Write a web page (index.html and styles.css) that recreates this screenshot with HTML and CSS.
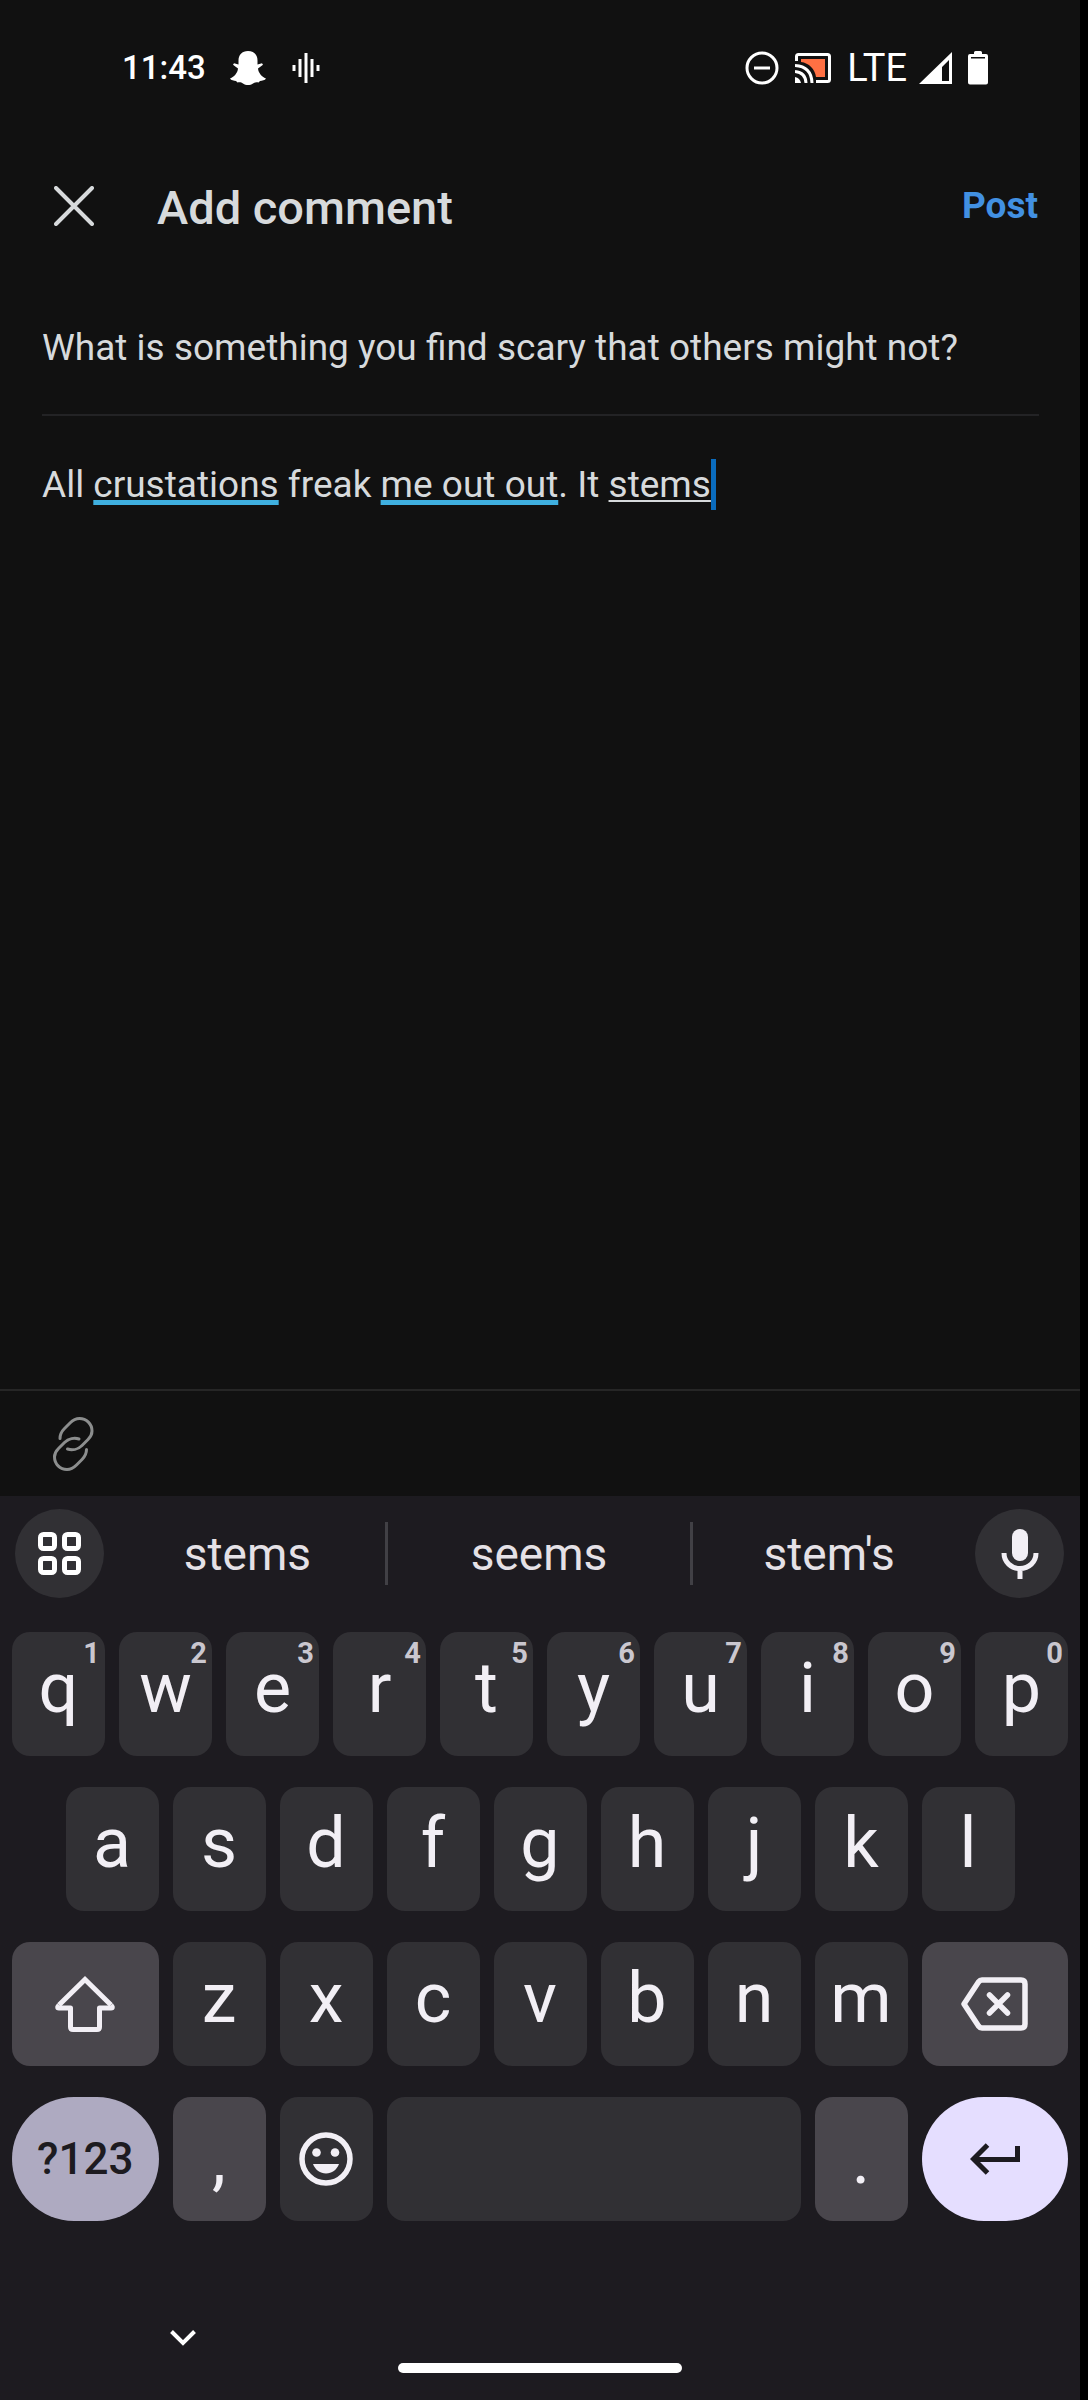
FILE: index.html
```html
<!DOCTYPE html>
<html lang="en">
<head>
<meta charset="utf-8">
<meta name="viewport" content="width=device-width, initial-scale=1">
<title>Add comment</title>
<link rel="stylesheet" href="styles.css">
</head>
<body>
<div class="screen">
  <div class="status">
    <span class="clock">11:43</span>
    <svg class="ghost" width="36" height="34" viewBox="0 0 36 34" fill="#fff" aria-hidden="true"><path d="M18 0C24 0 27.500 4 27.500 9.500V13.500L32 12.300L33 13.800L28 17.500C28.500 22 31.500 25.500 36 27.500C35 29.500 32 29.500 30 30L28.500 31.500C26 31 24.500 31.500 23 32.500C20 34.500 16 34.500 13 32.500C11.500 31.500 10 31 7.500 31.500L6 30C4 29.500 1 29.500 0 27.500C4.500 25.500 7.500 22 8 17.500L3 13.800L4 12.300L8.500 13.500V9.500C8.500 4 12 0 18 0Z"/></svg>
    <svg width="28" height="30" viewBox="0 0 28 30" stroke="#fff" stroke-width="3" aria-hidden="true"><path d="M2 12v6M8 6v18M14 0v30M20 6v18M26 12v6"/></svg>
    <span class="spacer"></span>
    <svg width="34" height="34" viewBox="0 0 34 34" fill="none" stroke="#fff" stroke-width="3" aria-hidden="true"><circle cx="17" cy="17" r="15"/><path d="M9 17h16"/></svg>
    <svg width="36" height="30" viewBox="0 0 36 30" fill="none" stroke="#fff" stroke-width="3" aria-hidden="true"><path fill="#ff7043" stroke="none" d="M6 6H30V24H21C20 16 14 10 6 9Z"/><path d="M1.500 8V3.500Q1.500 1.500 3.500 1.500H32.500Q34.500 1.500 34.500 3.500V26.500Q34.500 28.500 32.500 28.500H21M0 12.500Q16.500 13.500 17 30M0 18.500Q10.500 19.500 11 30"/><path fill="#fff" stroke="none" d="M0 24Q5 25 6 30H0Z"/></svg>
    <span class="network">LTE</span>
    <svg class="signal" width="33" height="32" viewBox="0 0 33 32" aria-hidden="true"><path fill="#fff" fill-rule="evenodd" d="M33 0V32H0ZM30 8L23 15V29H30Z"/></svg>
    <svg width="20" height="34" viewBox="0 0 20 34" fill="#fff" aria-hidden="true"><path d="M6 3V1.500Q6 0 7.500 0H12.500Q14 0 14 1.500V3H18Q20 3 20 5V6H0V5Q0 3 2 3ZM0 7.500H20V31.500Q20 33.500 18 33.500H2Q0 33.500 0 31.500Z"/><path d="M0 5.500H3V8H0ZM17 5.500H20V8H17Z"/></svg>
  </div>

  <header class="header">
    <button class="close" aria-label="Close"><svg width="40" height="40" viewBox="0 0 40 40" fill="none" stroke="#d7dadc" stroke-width="4" stroke-linecap="round"><path d="M2 2L38 38M38 2L2 38"/></svg></button>
    <h1 class="title">Add comment</h1>
    <button class="post">Post</button>
  </header>

  <main class="compose">
    <p class="question" id="question">What is something you find scary that others might not?</p>
    <div class="comment" contenteditable="true" spellcheck="false" role="textbox" aria-multiline="true" aria-labelledby="question">All <span class="flagged">crustations</span> freak <span class="flagged">me out out</span>. It <span class="composing">stems</span><span class="caret"></span></div>
  </main>

  <div class="tools">
    <button aria-label="Insert link"><svg width="41" height="54" viewBox="0 0 41 54" fill="none" stroke="#8c8e8e" stroke-width="3" stroke-linecap="round"><path id="link-half" d="M7 21.500C7 17 9 14 11.500 11.500L17 6C20 3 23 1.500 26.500 1.500C33.500 1.500 39 7 39 14C39 17.500 37.500 20 35 22.500L29 28.500C25 32.500 19 33.500 14.500 32"/><use href="#link-half" transform="rotate(180 20.250 27)"/></svg></button>
  </div>

  <section class="keyboard" aria-label="Keyboard">
    <div class="strip">
      <button class="round" aria-label="Keyboard menu"><svg width="43" height="43" viewBox="0 0 43 43" fill="none" stroke="#fff" stroke-width="5"><rect x="2.500" y="2.500" width="14" height="14" rx="3"/><rect x="26.500" y="2.500" width="14" height="14" rx="3"/><rect x="2.500" y="26.500" width="14" height="14" rx="3"/><rect x="26.500" y="26.500" width="14" height="14" rx="3"/></svg></button>
      <div class="suggestions">
        <button>stems</button>
        <button>seems</button>
        <button>stem's</button>
      </div>
      <button class="round" aria-label="Voice input"><svg width="38" height="50" viewBox="0 0 38 50" fill="none" stroke="#f2eff5" stroke-width="5"><rect x="11" y="0" width="16" height="32" rx="8" fill="#f2eff5" stroke="none"/><path d="M3 24C3 33 10 39.500 19 39.500S35 33 35 24M19 39V50"/></svg></button>
    </div>

    <div class="keys">
      <button class="key">q<sup>1</sup></button>
      <button class="key">w<sup>2</sup></button>
      <button class="key">e<sup>3</sup></button>
      <button class="key">r<sup>4</sup></button>
      <button class="key">t<sup>5</sup></button>
      <button class="key">y<sup>6</sup></button>
      <button class="key">u<sup>7</sup></button>
      <button class="key">i<sup>8</sup></button>
      <button class="key">o<sup>9</sup></button>
      <button class="key">p<sup>0</sup></button>

      <button class="key indent">a</button>
      <button class="key">s</button>
      <button class="key">d</button>
      <button class="key">f</button>
      <button class="key">g</button>
      <button class="key">h</button>
      <button class="key">j</button>
      <button class="key">k</button>
      <button class="key">l</button>

      <button class="key wide row-start icon dim" aria-label="Shift"><svg width="60" height="58" viewBox="0 0 60 58" fill="none" stroke="#f2eff5" stroke-width="5" stroke-linejoin="round"><path stroke-linejoin="miter" d="M4 30L30 4.500L56 30"/><path d="M4 30Q1.500 33 4 33H15.500V52Q15.500 54.500 18 54.500H42Q44.500 54.500 44.500 52V33H56Q58.500 33 56 30"/></svg></button>
      <button class="key">z</button>
      <button class="key">x</button>
      <button class="key">c</button>
      <button class="key">v</button>
      <button class="key">b</button>
      <button class="key">n</button>
      <button class="key">m</button>
      <button class="key wide icon dim" aria-label="Backspace"><svg width="67" height="54" viewBox="0 0 67 54" fill="none" stroke="#f2eff5" stroke-width="5.500" stroke-linejoin="round" stroke-linecap="round"><path d="M3 27L17.500 5Q19 3 21 3H60Q64 3 64 7V47Q64 51 60 51H21Q19 51 17.500 49ZM28.500 18L46.500 36M46.500 18L28.500 36"/></svg></button>

      <button class="key wide symbols">?123</button>
      <button class="key dim mark">,</button>
      <button class="key icon" aria-label="Emoji"><svg width="54" height="54" viewBox="0 0 54 54" fill="#f2eff5"><circle cx="27" cy="27" r="24" fill="none" stroke="#f2eff5" stroke-width="5.500"/><circle cx="17.500" cy="20.500" r="4.300"/><circle cx="36" cy="20.500" r="4.300"/><path d="M14 32H40C37.500 38 33 41.500 27 41.500S16.500 38 14 32Z"/></svg></button>
      <button class="key space" aria-label="Space"></button>
      <button class="key dim mark">.</button>
      <button class="key wide icon enter" aria-label="Enter"><svg width="50" height="32" viewBox="0 0 50 32" fill="none" stroke="#1d1b20" stroke-width="5"><path d="M47.500 3V16.500H4M17.500 2L3.500 16L17.500 30"/></svg></button>
    </div>

    <div class="nav">
      <button class="hide" aria-label="Hide keyboard"><svg width="26" height="16" viewBox="0 0 26 16" fill="none" stroke="#fff" stroke-width="4"><path d="M1.500 1.500L13 13L24.500 1.500"/></svg></button>
      <div class="pill"></div>
    </div>
  </section>
</div>
</body>
</html>
```
FILE: styles.css
```css
* { box-sizing: border-box; }

body {
  margin: 0;
  background: #000;
  font-family: Roboto, "Liberation Sans", sans-serif;
  color: #d7dadc;
}

button {
  margin: 0;
  padding: 0;
  border: 0;
  background: none;
  color: inherit;
  font: inherit;
}

svg {
  display: block;
  flex: none;
}

.screen {
  display: flex;
  flex-direction: column;
  min-height: 100vh;
  margin-right: 8px;
  background: #111;
}

/* System status bar */
.status {
  display: flex;
  align-items: center;
  gap: 16px;
  height: 135px;
  padding: 0 92px 0 122px;
  color: #fff;
}

.clock {
  font-size: 33px;
  font-weight: 500;
}

.ghost { margin-right: 10px; margin-left: 8px; }

.spacer { flex: 1; }

.network {
  font-size: 38px;
  margin-right: -4px;
}

/* Title bar */
.header {
  display: flex;
  align-items: center;
  height: 141px;
  padding: 0 42px 0 54px;
}

.title {
  flex: 1;
  margin: 0 0 0 63px;
  padding-top: 4px;
  font-size: 47px;
  font-weight: 500;
}

.post {
  color: #4290e2;
  font-size: 37px;
  font-weight: 700;
}

/* Post being answered and the draft */
.compose {
  flex: 1;
  display: flex;
  flex-direction: column;
  padding: 0 41px 0 42px;
  font-size: 37px;
  line-height: 52px;
}

.question {
  margin: 0;
  padding: 46px 0 40px;
  border-bottom: 2px solid #232325;
}

.comment {
  flex: 1;
  padding-top: 43px;
  outline: 0;
}

.flagged {
  text-decoration: underline 5px #3fb0e0;
  text-decoration-skip-ink: none;
  text-underline-offset: 3px;
}

.composing {
  text-decoration: underline 2px;
  text-decoration-skip-ink: none;
  text-underline-offset: 3px;
}

.caret {
  display: inline-block;
  width: 5px;
  height: 51px;
  vertical-align: top;
  background: #0a6cbe;
}

.tools {
  display: flex;
  align-items: center;
  height: 107px;
  padding: 0 53px;
  border-top: 2px solid #262626;
}

/* Keyboard */
.keyboard {
  background: #1d1b20;
  color: #f2eff5;
}

.strip {
  display: flex;
  align-items: center;
  height: 115px;
  padding: 0 16px 0 15px;
}

.round {
  display: grid;
  place-items: center;
  width: 89px;
  height: 89px;
  border-radius: 50%;
  background: #313034;
}

.suggestions {
  flex: 1;
  display: grid;
  grid-template-columns: 9fr 10fr 9fr;
  height: 63px;
  margin: 0 10px 0 6px;
  color: #e5e1e6;
  font-size: 46px;
}

.suggestions button + button { border-left: 3px solid #414045; }

.keys {
  display: grid;
  grid-template-columns: repeat(20, 1fr);
  grid-auto-rows: 124px;
  gap: 31px 14px;
  padding: 21px 12px 0;
}

.key {
  position: relative;
  grid-column: span 2;
  padding-bottom: 12px;
  border-radius: 18px;
  background: #313034;
  font-size: 70px;
  line-height: 84px;
}

.key sup {
  position: absolute;
  top: 4px;
  right: 5px;
  color: #cac7cf;
  font-size: 29px;
  font-weight: 700;
  line-height: 34px;
}

.indent { grid-column: 2 / span 2; }
.wide { grid-column: span 3; }
.row-start { grid-column: 1 / span 3; }
.space { grid-column: span 8; }
.dim { background: #49464c; }
.mark { padding: 0; }

.icon {
  display: grid;
  place-items: center;
  padding: 0;
}

.symbols,
.enter {
  border-radius: 62px;
  color: #1d1b20;
}

.symbols {
  background: #aeaac1;
  padding: 0;
  font-size: 44px;
  font-weight: 500;
}

.enter { background: #e5deff; }

/* Gesture area */
.nav { padding: 96px 0 27px; }

.hide {
  display: grid;
  place-items: center;
  width: 42px;
  height: 42px;
  margin-left: 162px;
}

.pill {
  width: 284px;
  height: 10px;
  margin: 4px auto 0;
  border-radius: 5px;
  background: #fff;
}
```
